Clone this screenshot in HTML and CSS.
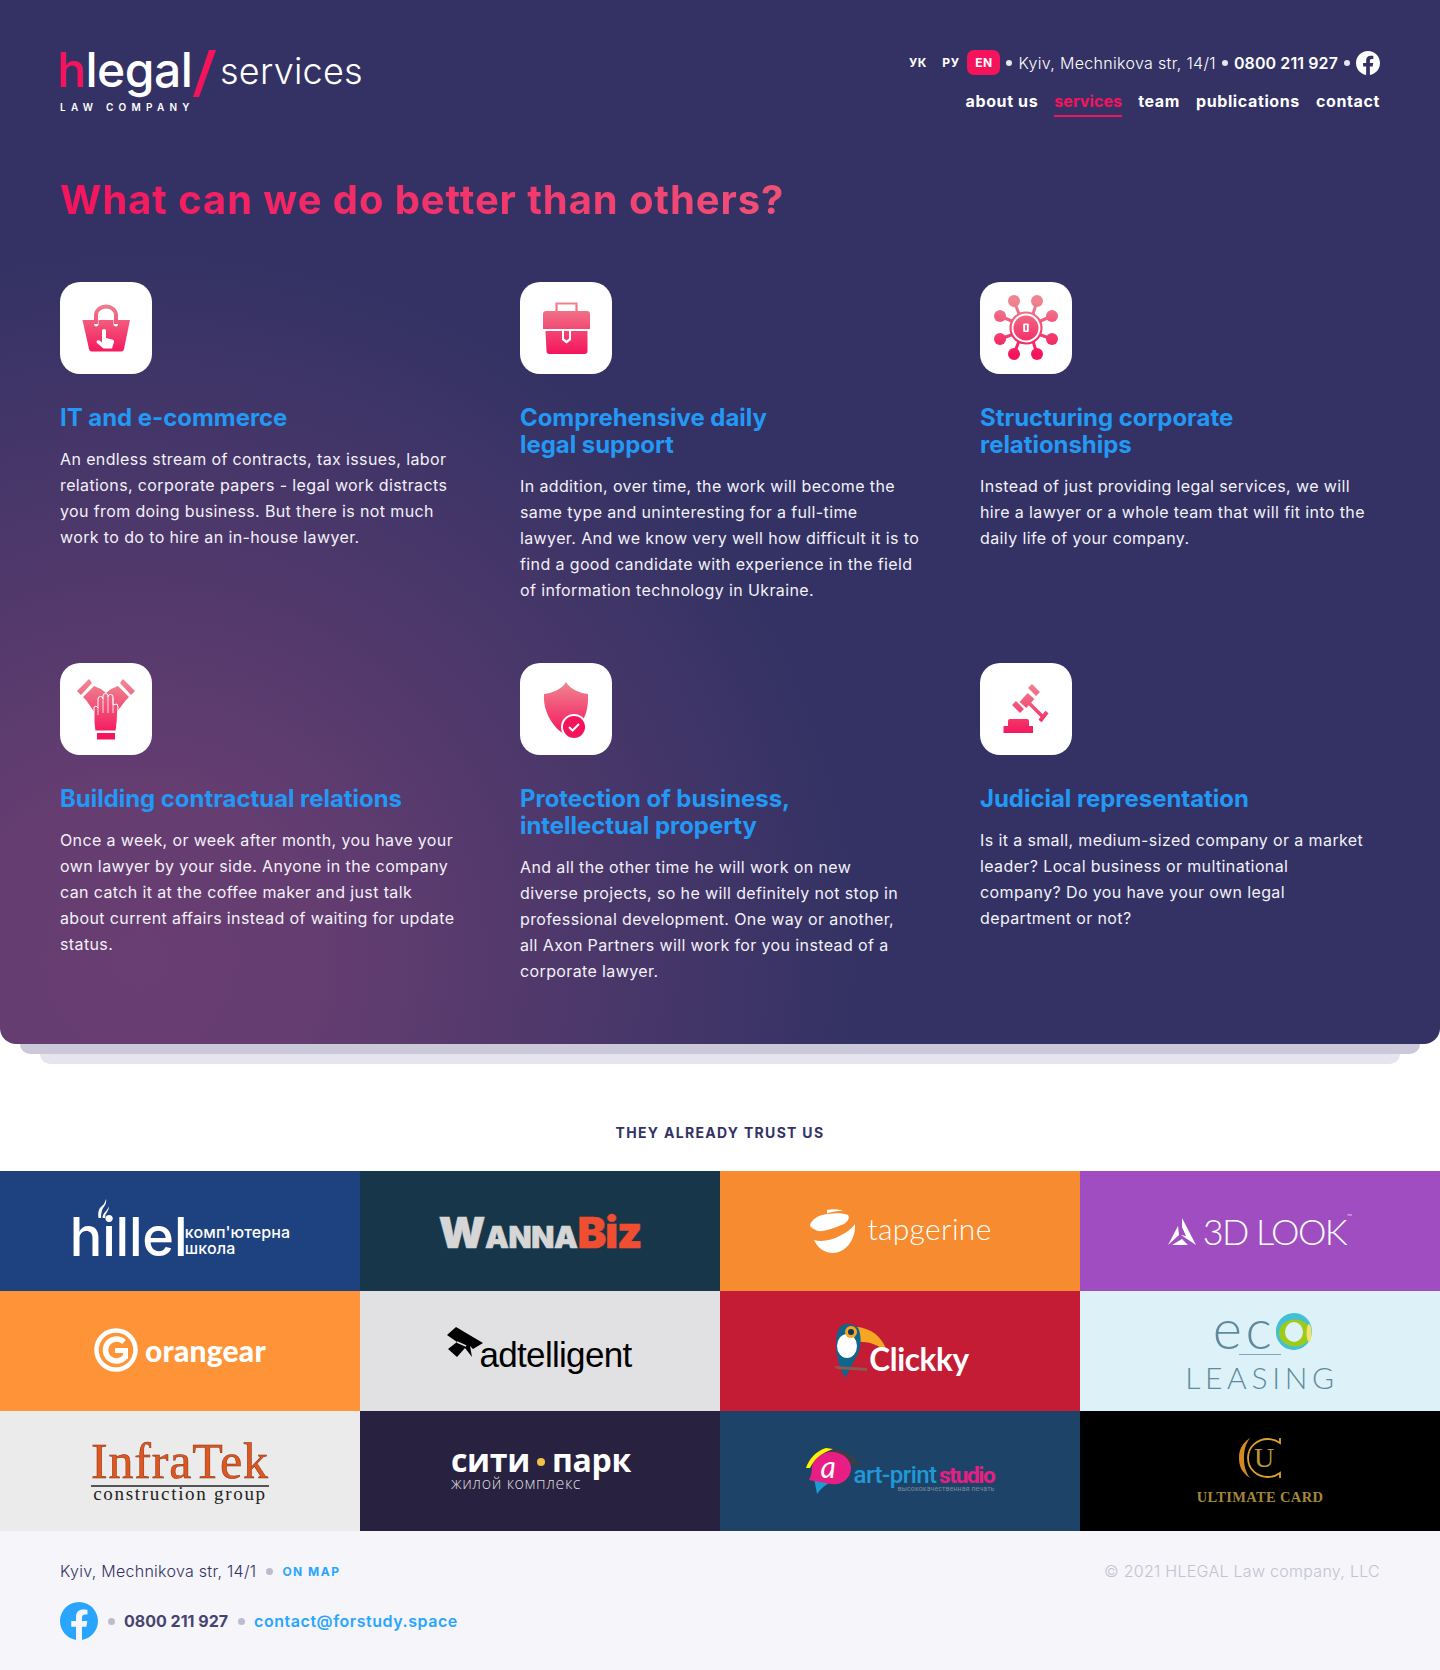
FILE: index.html
```html
<!DOCTYPE html>
<html lang="en">
<head>
<meta charset="utf-8">
<title>hlegal services</title>
<link rel="stylesheet" href="styles.css">
</head>
<body>
<svg class="defs" width="0" height="0" aria-hidden="true">
  <defs>
    <linearGradient id="pk" gradientUnits="userSpaceOnUse" x1="0" y1="20" x2="0" y2="72">
      <stop offset="0" stop-color="#ef8490"/>
      <stop offset="1" stop-color="#f5145c"/>
    </linearGradient>
  </defs>
</svg>

<div class="panel-wrap">
<section class="panel">
  <header class="header">
    <a class="brand">
      <div class="brand-top">
        <span class="brand-name"><span class="pink">h</span>legal</span>
        <svg class="slash" width="23" height="47" viewBox="0 0 23 47"><polygon points="0,47 6,47 23,0 16,0" fill="#f5145c"/></svg>
        <span class="brand-sub">services</span>
      </div>
      <div class="brand-tag">LAW COMPANY</div>
    </a>
    <div class="header-right">
      <div class="topline">
        <span class="lang">УК</span>
        <span class="lang">РУ</span>
        <span class="lang lang-on">EN</span>
        <i class="dot"></i>
        <span class="addr">Kyiv, Mechnikova str, 14/1</span>
        <i class="dot"></i>
        <span class="phone">0800 211 927</span>
        <i class="dot"></i>
        <svg class="fb" width="24" height="24" viewBox="0 0 24 24"><path fill="#fff" d="M24 12.07C24 5.4 18.63 0 12 0S0 5.4 0 12.07c0 6.03 4.39 11.02 10.13 11.93v-8.44H7.08v-3.49h3.05V9.41c0-3.02 1.79-4.69 4.53-4.69 1.31 0 2.69.24 2.69.24v2.97h-1.52c-1.49 0-1.95.93-1.95 1.89v2.25h3.33l-.53 3.49h-2.8V24C19.61 23.09 24 18.1 24 12.07z"/></svg>
      </div>
      <nav class="nav">
        <a>about us</a>
        <a class="active">services</a>
        <a>team</a>
        <a>publications</a>
        <a>contact</a>
      </nav>
    </div>
  </header>

  <h1 class="headline">What can we do better than others?</h1>

  <div class="cards">
    <article class="card">
      <div class="ico"><svg width="92" height="92" viewBox="0 0 92 92">
        <path fill="none" stroke="url(#pk)" stroke-width="4" d="M36 42V33a10 8.500 0 0 1 20 0v9"/>
        <path fill="url(#pk)" d="M22.500 38h11.500v5a2.500 2.500 0 0 0 4.500 0v-5h15v5a2.500 2.500 0 0 0 4.500 0v-5h12l-6 29a3 3 0 0 1-3 2.500H32a3 3 0 0 1-3-2.500z"/>
        <path fill="#fff" d="M42 49a2 2 0 0 1 4 0v7l6 1.500c1.500.4 2 1 2 2.500l-2 6.500H43.500L37 61c-.7-1-.6-2 .3-2.500.9-.5 2-.3 2.700.3l2 1.700z"/>
      </svg></div>
      <h2>IT and e-commerce</h2>
      <p>An endless stream of contracts, tax issues, labor<br>relations, corporate papers - legal work distracts<br>you from doing business. But there is not much<br>work to do to hire an in-house lawyer.</p>
    </article>
    <article class="card">
      <div class="ico"><svg width="92" height="92" viewBox="0 0 92 92">
        <path fill="none" stroke="url(#pk)" stroke-width="2.200" d="M36.500 29v-7.500h20V29"/>
        <path fill="url(#pk)" d="M26 29h41a3 3 0 0 1 3 3v15H23V32a3 3 0 0 1 3-3z"/>
        <path fill="url(#pk)" d="M25.500 49H42v9l4.500 3.500 4.500-3.500V49h16.500v20a3 3 0 0 1-3 3h-35a3 3 0 0 1-3-3z"/>
        <path fill="url(#pk)" d="M44 49h5v7.500l-2.500 2-2.500-2z"/>
      </svg></div>
      <h2>Comprehensive daily<br>legal support</h2>
      <p>In addition, over time, the work will become the<br>same type and uninteresting for a full-time<br>lawyer. And we know very well how difficult it is to<br>find a good candidate with experience in the field<br>of information technology in Ukraine.</p>
    </article>
    <article class="card">
      <div class="ico"><svg width="92" height="92" viewBox="0 0 92 92">
        <g fill="none" stroke="url(#pk)" stroke-width="3">
          <path d="M34 19l5 13M57 19l-4 13M20 34l14 6M72 34l-14 6M20 57l14-5M72 57l-14-5M34 72l5-13M57 72l-4-13"/>
        </g>
        <circle cx="46" cy="46" r="15" fill="#fff"/>
        <circle cx="46" cy="46" r="15.500" fill="none" stroke="url(#pk)" stroke-width="2.200"/>
        <g fill="url(#pk)">
          <circle cx="34" cy="19" r="6"/><circle cx="57" cy="19" r="6"/>
          <circle cx="20" cy="34" r="6"/><circle cx="72" cy="34" r="6"/>
          <circle cx="20" cy="57" r="6"/><circle cx="72" cy="57" r="6"/>
          <circle cx="34" cy="72" r="6"/><circle cx="57" cy="72" r="6"/>
          <circle cx="46" cy="46" r="12.500"/>
        </g>
        <rect x="43.200" y="41.500" width="5.600" height="8.500" rx="1" fill="#fff"/>
        <rect x="45.200" y="43" width="1.600" height="5.500" fill="#f2456e"/>
      </svg></div>
      <h2>Structuring corporate<br>relationships</h2>
      <p>Instead of just providing legal services, we will<br>hire a lawyer or a whole team that will fit into the<br>daily life of your company.</p>
    </article>
    <article class="card">
      <div class="ico"><svg width="92" height="92" viewBox="0 0 92 92">
        <g fill="url(#pk)">
          <polygon points="17,28 29,16 32,20 21,32"/>
          <polygon points="75,28 63,16 60,20 71,32"/>
          <path d="M23 34l11-11 7 3 5 4 5-4 7-3 11 11-3 3-10 13-6 2H38l-3-2-9-13z"/>
        </g>
        <path fill="url(#pk)" stroke="#fff" stroke-width="1" d="M35 68l-1-8V44l2-1 2 2V36a2.500 2.500 0 0 1 5 0V33a2.500 2.500 0 0 1 5 0v1a2.500 2.500 0 0 1 5 0v8l4-1 1 3-1 16-1 8z"/>
        <path stroke="#fff" stroke-width=".8" d="M38 45v7M43 36v14M48 34v16M53 35v15"/>
        <rect x="37" y="70" width="18" height="6.500" fill="url(#pk)"/>
      </svg></div>
      <h2>Building contractual relations</h2>
      <p>Once a week, or week after month, you have your<br>own lawyer by your side. Anyone in the company<br>can catch it at the coffee maker and just talk<br>about current affairs instead of waiting for update<br>status.</p>
    </article>
    <article class="card">
      <div class="ico"><svg width="92" height="92" viewBox="0 0 92 92">
        <path fill="url(#pk)" d="M46 19c4 7 13 11 22 12 .5 13-2 24-8 29L46 72c-8-4-15-12-19-22-2.500-6-3.500-13-3-19 9-1 18-5 22-12z"/>
        <circle cx="54" cy="64" r="13" fill="#fff"/>
        <circle cx="54" cy="64" r="11" fill="#f5145c"/>
        <path fill="none" stroke="#fff" stroke-width="2" d="M49 64l3.500 3.500 6.500-6.500"/>
      </svg></div>
      <h2>Protection of business,<br>intellectual property</h2>
      <p>And all the other time he will work on new<br>diverse projects, so he will definitely not stop in<br>professional development. One way or another,<br>all Axon Partners will work for you instead of a<br>corporate lawyer.</p>
    </article>
    <article class="card">
      <div class="ico"><svg width="92" height="92" viewBox="0 0 92 92">
        <g fill="none" stroke="url(#pk)">
          <path stroke-width="5.500" d="M50 23l8 8"/>
          <path stroke-width="5.500" d="M34 40l8 8"/>
          <path stroke-width="9" d="M51 33l-8 9"/>
          <path stroke-width="3.500" d="M48 39l14 14"/>
          <path stroke-width="4" d="M67 49l-7 9"/>
        </g>
        <path fill="url(#pk)" d="M30 56h17a2 2 0 0 1 2 2v5h4v7H23.500v-7H28v-5a2 2 0 0 1 2-2z"/>
      </svg></div>
      <h2>Judicial representation</h2>
      <p>Is it a small, medium-sized company or a market<br>leader? Local business or multinational<br>company? Do you have your own legal<br>department or not?</p>
    </article>
  </div>
</section>
<div class="layer layer-1"></div>
<div class="layer layer-2"></div>
</div>

<h3 class="trust">THEY ALREADY TRUST US</h3>

<section class="logos">
  <div class="cell c-hillel">
    <div class="hillel">
      <span class="hillel-name">hillel</span>
      <svg class="flame" width="11" height="19" viewBox="0 0 11 19"><path fill="#fff" d="M8 0c1 5-2 7-3.500 10C3.500 12.500 3 15 3 19H.5C-.5 13 1 9 4 7c2-1.500 3-3.500 4-7zM11 7c0 4-2 6-3.500 8.500L7 19H4.500c0-5 5-7 6.500-12z"/></svg>
      <span class="hillel-sub">комп'ютерна<br>школа</span>
    </div>
  </div>
  <div class="cell c-wanna"><span class="wanna"><b class="w1">W</b>ANNA<b class="w2">Biz</b></span></div>
  <div class="cell c-tap">
    <div class="tap">
      <svg width="46" height="45" viewBox="0 0 46 45"><g fill="#fff"><path d="M17 1c5-1.500 12-1 16 1-5 0-11 .5-16 2.500z"/><path d="M0 16C2 10 8 6 18 5c8-1.500 16-1 20 1 2 3 0 6-4 9-10 4-20 8-26 7-5-2-8-4-8-6z"/><path d="M4 31c14 4 34-6 41-16 1 15-9 29-22 29-9 0-16-6-19-13z"/></g></svg>
      <span>tapgerine</span>
    </div>
  </div>
  <div class="cell c-3d">
    <div class="look">
      <svg width="28" height="27" viewBox="0 0 28 27"><path fill="#fff" d="M14 0l14 27-9-6-6-4 5 1-4-9zM10 8l1 9-11 10zM14 21l6 6H4z"/></svg>
      <span>3D LOOK</span><sup>™</sup>
    </div>
  </div>

  <div class="cell c-orange">
    <div class="orangear">
      <svg width="44" height="44" viewBox="0 0 44 44"><circle cx="22" cy="22" r="19.500" fill="none" stroke="#fff" stroke-width="4.500"/><path fill="none" stroke="#fff" stroke-width="5.500" d="M30 14a11 11 0 1 0 1 15"/><path fill="#fff" d="M21 20h13v11h-5v-6h-8z"/></svg>
      <span>orangear</span>
    </div>
  </div>
  <div class="cell c-ad">
    <div class="adt">
      <svg width="36" height="31" viewBox="0 0 36 31"><path d="M9 0l27 16-10 6-3-3 2 11-7-9-8 9L1 22l9-7-10-7z" fill="#000"/><path d="M10 15l9 4" stroke="#e1e1e3" stroke-width="1.500"/></svg>
      <span>adtelligent</span>
    </div>
  </div>
  <div class="cell c-click">
    <div class="click">
      <svg width="54" height="54" viewBox="0 0 54 54">
        <path fill="#f6a623" d="M21 3c12 0 27 7 32 25-9-8-21-11-32-10z"/>
        <path fill="#0e668d" d="M13 0C5 0 2 8 2 22c0 10 4 22 9 32 5-8 9-18 13-24 4-8 3-22 0-26-3-3-7-4-11-4z"/>
        <ellipse cx="13" cy="22" rx="10" ry="12" fill="#fff"/>
        <circle cx="17" cy="8" r="6" fill="#f6a623"/><circle cx="17" cy="8" r="3" fill="#0a3a5a"/>
        <path d="M0 42l33 2v3L3 45z" fill="#8a5a50"/>
      </svg>
      <span>Clickky</span>
    </div>
  </div>
  <div class="cell c-eco">
    <div class="eco">
      <div class="eco-top">
        <span>ec</span>
        <svg width="36" height="37" viewBox="0 0 36 37"><ellipse cx="18" cy="18.500" rx="18" ry="18.500" transform="rotate(15 18 18)" fill="#45bfd6"/><ellipse cx="19" cy="20" rx="16" ry="13.500" fill="#9ccb19"/><ellipse cx="33" cy="20" rx="2.500" ry="9" fill="#f4e36a"/><ellipse cx="18" cy="19" rx="9" ry="10" fill="#dcf2f8"/></svg>
      </div>
      <div class="eco-line"></div>
      <div class="eco-name">LEASING</div>
    </div>
  </div>

  <div class="cell c-infra">
    <div class="infra">
      <div class="infra-name">InfraTek</div>
      <div class="infra-sub">construction group</div>
    </div>
  </div>
  <div class="cell c-city">
    <div class="city">
      <div class="city-name">сити<i></i>парк</div>
      <div class="city-sub">жилой комплекс</div>
    </div>
  </div>
  <div class="cell c-art">
    <div class="art">
      <svg width="54" height="46" viewBox="0 0 54 46">
        <path fill="#3d3d44" d="M18 2c14-3 28 3 36 15l-9-1-8-6z"/>
        <path fill="#fff200" d="M0 20C3 11 10 3 20 0l7 1C15 5 8 12 4 20z"/>
        <path fill="#1e9ad6" d="M8 30l21 2C22 35 16 39 11 46z"/>
        <path fill="#e91e84" d="M26 4c11 0 19 8 19 16 0 10-9 18-20 16-7-1-15-3-22-4 2-4 3-8 3-13C7 12 15 4 26 4z"/>
      </svg>
      <em>a</em>
      <div class="art-text">
        <div class="art-name"><span class="c1">art-print</span> <span class="c2">studio</span></div>
        <div class="art-sub">высококачественная печать</div>
      </div>
    </div>
  </div>
  <div class="cell c-ult">
    <div class="ult">
      <svg width="42" height="42" viewBox="0 0 42 42">
        <path fill="#d38a22" d="M11 1C2 7 0 14 0 21s2 14 11 20C6 34 5 28 5 21S6 8 11 1z"/>
        <path fill="none" stroke="#dca02d" stroke-width="1.800" d="M41 1v5C37 3 33 2 29 2 18 2 9 10 9 21s9 19 20 19c4 0 8-1 12-4v5"/>
        <text class="ult-u" x="25" y="30" text-anchor="middle">U</text>
      </svg>
      <div class="ult-name">ULTIMATE CARD</div>
    </div>
  </div>
</section>

<footer class="footer">
  <div class="foot-row">
    <div class="foot-group">
      <span class="foot-addr">Kyiv, Mechnikova str, 14/1</span>
      <i class="fdot"></i>
      <a class="onmap">ON MAP</a>
    </div>
    <div class="copy">© 2021 HLEGAL Law company, LLC</div>
  </div>
  <div class="foot-group foot-contacts">
    <svg width="38" height="38" viewBox="0 0 24 24"><path fill="#2aa5ff" d="M24 12.07C24 5.4 18.63 0 12 0S0 5.4 0 12.07c0 6.03 4.39 11.02 10.13 11.93v-8.44H7.08v-3.49h3.05V9.41c0-3.02 1.79-4.69 4.53-4.69 1.31 0 2.69.24 2.69.24v2.97h-1.52c-1.49 0-1.95.93-1.95 1.89v2.25h3.33l-.53 3.49h-2.8V24C19.61 23.09 24 18.1 24 12.07z"/></svg>
    <i class="fdot"></i>
    <span class="foot-phone">0800 211 927</span>
    <i class="fdot"></i>
    <a class="foot-mail">contact@forstudy.space</a>
  </div>
</footer>
</body>
</html>
```

FILE: styles.css
```css
* { box-sizing: border-box; }
html, body { margin: 0; padding: 0; }
body {
  font-family: "Inter", "Liberation Sans", sans-serif;
  background: #fff;
  color: #343264;
  width: 1440px;
}
h1, h2, h3, p { margin: 0; }
.defs { position: absolute; }

.panel-wrap { display: flex; flex-direction: column; align-items: center; }
.panel {
  width: 100%;
  height: 1044px;
  padding: 50px 60px 60px;
  border-radius: 0 0 16px 16px;
  color: #fff;
  background: #343264 radial-gradient(ellipse 720px 710px at 140px 960px, #693e72 0%, #653d71 24%, #343264 100%);
}
.layer { height: 10px; border-radius: 0 0 12px 12px; }
.layer-1 { width: 1400px; background: #cac8d9; }
.layer-2 { width: 1360px; background: #e6e5ef; }

.header { display: flex; justify-content: space-between; align-items: flex-start; }
.brand { display: flex; flex-direction: column; }
.brand-top { display: flex; align-items: flex-start; height: 47px; }
.brand-name { font-size: 48px; font-weight: 500; line-height: 46px; letter-spacing: -.5px; width: 135px; margin: -3px 0 0 -3px; }
.pink { color: #f5145c; }
.slash { margin-left: 1px; flex: none; }
.brand-sub { font-size: 36px; font-weight: 300; line-height: 46px; margin: -2px 0 0 4px; letter-spacing: .25px; }
.brand-tag { font-size: 10px; font-weight: 600; letter-spacing: 5.25px; line-height: 12px; margin-top: 4px; white-space: nowrap; }

.header-right { display: flex; flex-direction: column; align-items: flex-end; }
.topline { display: flex; align-items: center; height: 25px; font-size: 16px; }
.lang { font-size: 12px; font-weight: 700; letter-spacing: .6px; width: 33px; height: 25px; line-height: 25px; text-align: center; border-radius: 7px; }
.lang-on { background: #f5145c; }
.dot { width: 6px; height: 6px; border-radius: 50%; background: #e6e6ee; margin: 0 6px; flex: none; }
.addr { font-weight: 300; letter-spacing: .32px; }
.phone { font-weight: 600; letter-spacing: .1px; }
.fb { display: block; }
.nav { display: flex; gap: 16px; margin-top: 14px; font-size: 16px; font-weight: 700; line-height: 24px; }
.nav a { display: block; padding-bottom: 2px; border-bottom: 2px solid transparent; letter-spacing: .62px; }
.nav .active { color: #f5145c; border-bottom-color: #f5145c; letter-spacing: .1px; }

.headline {
  font-size: 40px; font-weight: 700; line-height: 48px; margin-top: 59px; letter-spacing: .9px;
  background: linear-gradient(90deg, #f5145c, #ef5078);
  -webkit-background-clip: text; background-clip: text; color: transparent;
  width: max-content;
}

.cards { display: grid; grid-template-columns: repeat(3, 460px); row-gap: 60px; margin-top: 58px; }
.ico { width: 92px; height: 92px; background: #fff; border-radius: 20px; }
.ico svg { display: block; }
.card h2 { font-size: 24px; line-height: 27px; font-weight: 700; color: #2299f5; margin-top: 30px; letter-spacing: -.05px; }
.card p { font-size: 16px; line-height: 26px; font-weight: 400; margin-top: 15px; color: #f2f1f7; white-space: nowrap; letter-spacing: .38px; }

.trust { font-size: 14px; line-height: 20px; font-weight: 700; letter-spacing: 1.3px; text-align: center; margin-top: 59px; margin-bottom: 28px; color: #343264; }

.logos { display: grid; grid-template-columns: repeat(4, 360px); grid-auto-rows: 120px; }
.cell { display: flex; align-items: center; justify-content: center; overflow: hidden; }
.c-hillel { background: #1d427f; }
.c-wanna { background: #173649; }
.c-tap { background: #f68b2f; }
.c-3d { background: #a04dc1; }
.c-orange { background: #ff9338; }
.c-ad { background: #e1e1e3; }
.c-click { background: #c41c34; }
.c-eco { background: #dcf2f8; }
.c-infra { background: #ebebeb; }
.c-city { background: #282140; }
.c-art { background: #1d4468; }
.c-ult { background: #000; }

.hillel { position: relative; display: flex; align-items: flex-end; color: #fff; margin-top: 12px; }
.hillel-name { font-size: 54px; line-height: 50px; font-weight: 500; letter-spacing: -.2px; width: 115px; }
.flame { position: absolute; left: 28px; top: -13px; }
.hillel-sub { font-size: 16px; line-height: 16px; font-weight: 500; margin-bottom: 6px; letter-spacing: .1px; }

.wanna { font-weight: 900; font-size: 30px; color: #d6d6d6; line-height: 40px; letter-spacing: -.3px; margin-top: 6px; -webkit-text-stroke: .6px currentColor; }
.w1 { font-size: 43px; font-weight: 900; }
.w2 { font-size: 43px; font-weight: 900; color: #f04e30; letter-spacing: -1px; }

.tap { display: flex; align-items: center; gap: 11px; color: #fff; font-family: "Lato", sans-serif; font-size: 30px; font-weight: 300; letter-spacing: .3px; margin-left: 2px; }
.tap span { margin-bottom: 7px; }

.look { display: flex; align-items: center; color: #fff; font-family: "Lato", sans-serif; font-size: 36px; font-weight: 300; gap: 7px; line-height: 40px; letter-spacing: -1.6px; }
.look sup { font-size: 7px; margin: -30px 0 0 -6px; letter-spacing: 0; }

.orangear { display: flex; align-items: center; gap: 7px; color: #fff; font-family: "Lato", sans-serif; font-weight: 900; font-size: 30px; letter-spacing: .2px; margin-top: -3px; }

.adt { position: relative; font-family: "Liberation Sans", sans-serif; color: #000; font-size: 35px; letter-spacing: -.7px; line-height: 40px; padding: 8px 0 0 33px; margin-left: -2px; }
.adt svg { position: absolute; left: 0; top: 0; }

.click { position: relative; display: flex; align-items: flex-end; color: #fff; font-family: "Lato", sans-serif; font-weight: 700; font-size: 31.500px; line-height: 34px; margin-left: 3px; }
.click svg { display: block; margin-right: -19px; }
.click span { margin-bottom: 2px; letter-spacing: -.4px; }

.eco { display: flex; flex-direction: column; align-items: center; color: #5f8a9b; }
.eco-top { display: flex; align-items: center; margin-left: 5px; height: 37px; }
.eco-top svg { margin-top: 4px; }
.eco-top span { font-size: 56px; font-weight: 300; line-height: 37px; letter-spacing: 3.5px; margin-right: 1px; font-family: "Lato", sans-serif; margin-top: -4px; }
.eco-line { width: 42px; height: 1px; background: #7fa8b6; margin-top: 6px; }
.eco-name { font-family: "Lato", sans-serif; font-weight: 300; font-size: 30px; line-height: 28px; letter-spacing: 4.7px; margin-top: 8px; margin-right: -4px; }

.infra { font-family: "Liberation Serif", serif; text-align: center; }
.infra-name { color: #e0561f; font-size: 50px; line-height: 44px; -webkit-text-stroke: .5px #7a2e10; letter-spacing: .8px; border-bottom: 2px solid #555; padding-bottom: 2px; }
.infra-sub { color: #222; font-size: 19px; line-height: 18px; letter-spacing: 1.7px; white-space: nowrap; margin-top: -2px; }

.city { color: #fff; margin: -8px 0 0 2px; }
.city-name { display: flex; align-items: center; font-family: "Open Sans", sans-serif; font-weight: 700; font-size: 32px; line-height: 32px; letter-spacing: -.3px; }
.city-name i { width: 8px; height: 8px; margin: 3px 7px 0; border-radius: 50%; background: #efc14a; }
.city-sub { font-family: "Open Sans", sans-serif; font-size: 16px; font-weight: 300; line-height: 14px; letter-spacing: .6px; color: #ddd; }

.art { position: relative; display: flex; align-items: flex-end; width: 189px; }
.art svg { display: block; flex: none; margin-right: -6px; }
.art em { position: absolute; left: 15px; top: 4px; font-family: "Lato", sans-serif; font-size: 30px; color: #fff; line-height: 28px; }
.art-text { width: 141px; margin-bottom: 1px; }
.art-name { font-family: "Roboto", sans-serif; font-weight: 500; font-size: 24px; line-height: 22px; white-space: nowrap; letter-spacing: -.5px; word-spacing: -3px; }
.c1 { color: #2199d8; }
.c2 { color: #e91e84; font-size: 22.500px; font-weight: 700; letter-spacing: -1.3px; }
.art-sub { font-family: "Roboto", sans-serif; font-size: 7px; line-height: 7px; color: #7b8da0; white-space: nowrap; text-align: right; letter-spacing: .1px; }

.ult { display: flex; flex-direction: column; align-items: center; font-family: "Liberation Serif", serif; color: #b58a30; margin-top: -2px; }
.ult svg { display: block; }
.ult-u { font-family: "Liberation Serif", serif; font-size: 28px; fill: #b8963f; }
.ult-name { font-size: 14.500px; font-weight: 700; line-height: 14px; margin-top: 11px; letter-spacing: .35px; color: #a5873c; }

.footer { background: #f5f5fa; height: 139px; padding: 30px 60px 0; }
.foot-row { display: flex; justify-content: space-between; align-items: center; height: 20px; }
.foot-group { display: flex; align-items: center; }
.foot-addr { font-size: 16px; font-weight: 300; color: #343264; letter-spacing: .28px; }
.fdot { width: 7px; height: 7px; border-radius: 50%; background: #bcbccb; margin: 0 9.500px; flex: none; }
.onmap { font-size: 12px; font-weight: 700; color: #2aa5ff; letter-spacing: 1.5px; }
.copy { font-size: 16px; font-weight: 300; color: #c3c3cf; letter-spacing: .28px; }
.foot-contacts { margin-top: 21px; }
.foot-contacts svg { display: block; }
.foot-phone { font-size: 16px; font-weight: 700; color: #47446f; }
.foot-mail { font-size: 16px; font-weight: 600; color: #2aa5ff; letter-spacing: .55px; }
```
